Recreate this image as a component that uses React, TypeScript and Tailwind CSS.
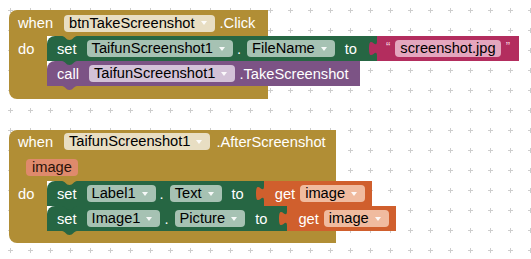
import React from 'react';

type PillProps = { text: string; className: string; arrow?: boolean };

const Pill: React.FC<PillProps> = ({ text, className, arrow = true }) => (
  <span
    className={`inline-flex h-[17px] items-center rounded-[4px] pl-[5px] leading-none text-black ${arrow ? 'pr-[8px]' : 'pr-[5px]'} ${className}`}
  >
    {text}
    {arrow && (
      <svg className="ml-[6px] h-[4px] w-[6px]" viewBox="0 0 6 4">
        <path d="M0 0H6L3 4Z" fill="#ffffff" fillOpacity="0.9" />
      </svg>
    )}
  </span>
);

// statement notch sticking out under a block (or down from a C-block's inner edge)
const Notch: React.FC<{ fill: string; className: string }> = ({ fill, className }) => (
  <svg className={`absolute left-[15px] z-10 h-[4px] w-[15px] ${className}`} viewBox="0 0 15 4">
    <path d="M0 0C3 0 4 4 7.5 4C11 4 12 0 15 0Z" fill={fill} />
  </svg>
);

// value-input puzzle tab on the left edge of a reporter block
const PuzzleTab: React.FC<{ fill: string }> = ({ fill }) => (
  <svg className="absolute -left-[8px] top-[5px] h-[15px] w-[8px] overflow-visible" viewBox="0 0 8 15">
    <path d="M8 0C8 10 0 -8 0 7.5S8 5 8 15Z" fill={fill} />
  </svg>
);

const GridBg = () => (
  <svg className="absolute inset-0 h-full w-full">
    <defs>
      <pattern id="plus" width="20" height="20" patternUnits="userSpaceOnUse">
        <path d="M8 10.5H13M10.5 8V13" stroke="#cdcdcd" strokeWidth="1" />
      </pattern>
    </defs>
    <rect width="100%" height="100%" fill="url(#plus)" />
  </svg>
);

const GetBlock: React.FC = () => (
  <div className="relative flex h-[25px] items-center bg-[#d05f2d] pl-[11px] pr-[7px]">
    <PuzzleTab fill="#d05f2d" />
    <span>get</span>
    <Pill text="image" className="ml-[5px] bg-[#f0bb9f]" />
  </div>
);

const TextBlock: React.FC = () => (
  <div className="relative flex h-[25px] items-center bg-[#b32d5e] pl-[9px] pr-[9px]">
    <PuzzleTab fill="#b32d5e" />
    <span className="-mt-[5px] text-[13px] leading-none text-[#f6d3df]">“</span>
    <Pill text="screenshot.jpg" arrow={false} className="ml-[5px] bg-[#e4a6be]" />
    <span className="-mt-[5px] ml-[5px] text-[13px] leading-none text-[#f6d3df]">”</span>
  </div>
);

const BlockOne = () => (
  <div className="flex flex-col items-start">
    <div className="flex h-[26px] w-[259px] items-center rounded-tl-[8px] bg-[#b18e35] pl-[9px]">
      <span>when</span>
      <Pill text="btnTakeScreenshot" className="ml-[11px] bg-[#e8dec3]" />
      <span className="ml-[5px]">.Click</span>
    </div>
    <div className="flex">
      <div className="w-[38px] bg-[#b18e35] pl-[9px]">
        <div className="flex h-[25px] items-center">do</div>
      </div>
      <div className="relative flex flex-col items-start">
        <Notch fill="#b18e35" className="top-0" />
        <div className="relative flex h-[25px]">
          <div className="flex items-center rounded-tl-[8px] bg-[#266643] pl-[10px] pr-[20px]">
            <span>set</span>
            <Pill text="TaifunScreenshot1" className="ml-[10px] bg-[#a6c2b3]" />
            <span className="ml-[4px]">.</span>
            <Pill text="FileName" className="ml-[6px] bg-[#a6c2b3]" />
            <span className="ml-[10px]">to</span>
          </div>
          <TextBlock />
          <Notch fill="#266643" className="-bottom-[4px]" />
        </div>
        <div className="relative flex h-[25px] items-center rounded-tl-[8px] bg-[#7c5385] pl-[10px] pr-[11px]">
          <span>call</span>
          <Pill text="TaifunScreenshot1" className="ml-[10px] bg-[#d3c2d7]" />
          <span className="ml-[4px]">.TakeScreenshot</span>
          <Notch fill="#7c5385" className="-bottom-[4px]" />
        </div>
      </div>
    </div>
    <div className="h-[13px] w-[259px] rounded-bl-[8px] bg-[#b18e35]" />
  </div>
);

const BlockTwo = () => (
  <div className="flex flex-col items-start">
    <div className="flex w-[327px] flex-col rounded-tl-[8px] bg-[#b18e35]">
      <div className="flex h-[23px] items-center pl-[9px]">
        <span>when</span>
        <Pill text="TaifunScreenshot1" className="ml-[11px] bg-[#e8dec3]" />
        <span className="ml-[6px]">.AfterScreenshot</span>
      </div>
      <div className="flex h-[28px] items-center pl-[17px]">
        <span className="inline-flex h-[17px] items-center rounded-[4px] bg-[#df8a6c] px-[6px] leading-none text-[#2a1209]">
          image
        </span>
      </div>
    </div>
    <div className="flex">
      <div className="w-[38px] bg-[#b18e35] pl-[9px]">
        <div className="flex h-[25px] items-center">do</div>
      </div>
      <div className="relative flex flex-col items-start">
        <Notch fill="#b18e35" className="top-0" />
        <div className="relative flex h-[25px]">
          <div className="flex items-center rounded-tl-[8px] bg-[#266643] pl-[10px] pr-[20px]">
            <span>set</span>
            <Pill text="Label1" className="ml-[10px] bg-[#a6c2b3]" />
            <span className="ml-[4px]">.</span>
            <Pill text="Text" className="ml-[6px] bg-[#a6c2b3]" />
            <span className="ml-[10px]">to</span>
          </div>
          <GetBlock />
          <Notch fill="#266643" className="-bottom-[4px]" />
        </div>
        <div className="relative flex h-[25px]">
          <div className="flex items-center rounded-tl-[8px] bg-[#266643] pl-[10px] pr-[20px]">
            <span>set</span>
            <Pill text="Image1" className="ml-[10px] bg-[#a6c2b3]" />
            <span className="ml-[4px]">.</span>
            <Pill text="Picture" className="ml-[6px] bg-[#a6c2b3]" />
            <span className="ml-[10px]">to</span>
          </div>
          <GetBlock />
          <Notch fill="#266643" className="-bottom-[4px]" />
        </div>
      </div>
    </div>
    <div className="h-[12px] w-[327px] rounded-bl-[8px] bg-[#b18e35]" />
  </div>
);

export default function App() {
  return (
    <div className="relative h-[259px] w-[531px] overflow-hidden bg-white font-['Liberation_Sans',Arial,sans-serif] text-[14.67px] text-white">
      <GridBg />
      <div className="relative flex flex-col items-start gap-[31px] pl-[9px] pt-[10px]">
        <BlockOne />
        <BlockTwo />
      </div>
    </div>
  );
}
